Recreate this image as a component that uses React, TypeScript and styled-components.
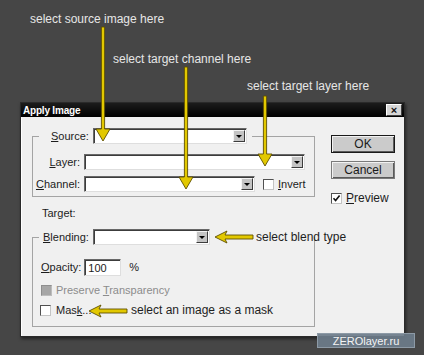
import React from "react";
import styled, { createGlobalStyle } from "styled-components";

const Global = createGlobalStyle`
  html, body {
    margin: 0;
    padding: 0;
    background: #464646;
  }
  body {
    font-family: "Liberation Sans", Arial, sans-serif;
  }
`;

const Page = styled.div`
  position: relative;
  width: 424px;
  height: 355px;
  box-sizing: border-box;
  padding: 102px 0 0 20px;
  overflow: hidden;
  background: #464646;
`;

const Dialog = styled.div`
  width: 385px;
  height: 235px;
  box-sizing: border-box;
  display: flex;
  flex-direction: column;
  background: #f0f0f0;
  border: 1px solid #2a2a2a;
  box-shadow: inset 1px 1px 0 #fff, 1px 2px 3px rgba(0, 0, 0, 0.5);
  font-family: "Liberation Sans", Arial, sans-serif;
  font-size: 11px;
  color: #1c1c1c;
`;

const TitleBar = styled.div`
  height: 14px;
  display: flex;
  align-items: center;
  justify-content: space-between;
  padding: 0 2px;
  background: linear-gradient(#1c1c1c, #000);
`;

const Title = styled.span`
  color: #fff;
  font-weight: bold;
  font-size: 10px;
  letter-spacing: -0.2px;
`;

const CloseButton = styled.span`
  width: 16px;
  height: 12px;
  box-sizing: border-box;
  display: flex;
  align-items: center;
  justify-content: center;
  background: #d6d6d6;
  border: 1px solid;
  border-color: #fff #404040 #404040 #fff;
  font-size: 11px;
  font-weight: bold;
  line-height: 1;
  color: #111;
`;

const Body = styled.div`
  flex: 1;
  display: flex;
  gap: 16px;
  padding: 0 9px 0 11px;
`;

const Main = styled.div`
  width: 283px;
  display: flex;
  flex-direction: column;
  padding-top: 11px;
`;

const Group = styled.fieldset<{ $padBottom: number }>`
  margin: 0;
  padding: 0 0 ${(p) => p.$padBottom}px 0;
  border: 1px solid #a4a4a4;
  min-inline-size: 0;
`;

const Legend = styled.legend<{ $inset: number; $fill?: boolean }>`
  margin-left: 6px;
  padding: 0 5px 0 ${(p) => p.$inset}px;
  box-sizing: border-box;
  width: ${(p) => (p.$fill ? "275px" : "auto")};
`;

const LegendInner = styled.span`
  display: flex;
  align-items: center;
  gap: 4px;
`;

const Row = styled.div<{ $mt: number; $indent?: number }>`
  display: flex;
  align-items: center;
  margin-top: ${(p) => p.$mt}px;
  padding-left: ${(p) => p.$indent ?? 0}px;
`;

const Label = styled.label<{ $w?: number; $muted?: boolean }>`
  width: ${(p) => (p.$w ? `${p.$w}px` : "auto")};
  text-align: right;
  white-space: nowrap;
  color: ${(p) => (p.$muted ? "#8c8c8c" : "#1c1c1c")};
  line-height: 13px;
`;

const Select = styled.div<{ $w: number }>`
  width: ${(p) => p.$w}px;
  height: 16px;
  box-sizing: border-box;
  display: flex;
  justify-content: flex-end;
  padding: 1px 1px 1px 2px;
  margin-left: 4px;
  background: #fff;
  border: 1px solid;
  border-color: #686868 #dedede #dedede #686868;
  box-shadow: inset 1px 1px 0 #3c3c3c;
`;

const DropButton = styled.span`
  width: 12px;
  height: 100%;
  box-sizing: border-box;
  display: flex;
  align-items: center;
  justify-content: center;
  background: #c4c4c4;
  border: 1px solid;
  border-color: #f4f4f4 #3c3c3c #3c3c3c #f4f4f4;

  &::after {
    content: "";
    border-left: 3px solid transparent;
    border-right: 3px solid transparent;
    border-top: 3px solid #000;
  }
`;

const TextInput = styled.div`
  width: 37px;
  height: 17px;
  box-sizing: border-box;
  padding: 0 3px;
  margin-left: 3px;
  display: flex;
  align-items: center;
  background: #fff;
  border: 1px solid;
  border-color: #686868 #dedede #dedede #686868;
  box-shadow: inset 1px 1px 0 #3c3c3c;
`;

const Box = styled.span<{ $disabled?: boolean; $gap?: number }>`
  width: 11px;
  height: 11px;
  box-sizing: border-box;
  flex: none;
  display: flex;
  align-items: center;
  justify-content: center;
  margin-right: ${(p) => p.$gap ?? 4}px;
  background: ${(p) => (p.$disabled ? "#a6a6a6" : "#fff")};
  border: 1px solid;
  border-color: ${(p) =>
    p.$disabled ? "#8e8e8e #bdbdbd #bdbdbd #8e8e8e" : "#505050 #c4c4c4 #c4c4c4 #505050"};
`;

const TargetLabel = styled.div`
  margin: 10px 0 0 10px;
  line-height: 13px;
`;

const Side = styled.div`
  width: 64px;
  display: flex;
  flex-direction: column;
  padding-top: 18px;
`;

const Button = styled.div<{ $default?: boolean; $mt?: number }>`
  height: 18px;
  box-sizing: border-box;
  display: flex;
  align-items: center;
  justify-content: center;
  margin-top: ${(p) => p.$mt ?? 0}px;
  background: #cbcbcb;
  border: 1px solid ${(p) => (p.$default ? "#1a1a1a" : "#7a7a7a")};
  box-shadow: inset 1px 1px 0 #f2f2f2, inset -1px -1px 0 #5a5a5a;
  font-size: 12px;
  color: #1a1a1a;
`;

const Check = styled.div<{ $mt: number }>`
  display: flex;
  align-items: center;
  margin-top: ${(p) => p.$mt}px;
  line-height: 13px;
  font-size: 12px;
`;

const Callout = styled.div<{ $x: number; $y: number; $dark?: boolean }>`
  position: absolute;
  left: ${(p) => p.$x}px;
  top: ${(p) => p.$y}px;
  font-family: "Liberation Sans", Arial, sans-serif;
  font-size: 12px;
  line-height: 14px;
  white-space: nowrap;
  color: ${(p) => (p.$dark ? "#1e1e1e" : "#e6e6e6")};
`;

const Arrows = styled.svg`
  position: absolute;
  left: 0;
  top: 0;
  pointer-events: none;
`;

const Watermark = styled.div`
  position: absolute;
  left: 317px;
  top: 333px;
  width: 98px;
  height: 15px;
  box-sizing: border-box;
  display: flex;
  align-items: center;
  justify-content: center;
  background: rgba(108, 124, 138, 0.92);
  border: 1px solid #8d9aa6;
  color: #f4f4f4;
  font-family: "Liberation Sans", Arial, sans-serif;
  font-size: 11px;
`;

function Tick() {
  return (
    <svg width="9" height="9" viewBox="0 0 9 9">
      <path d="M1.5 4.2 L3.6 6.5 L7.6 1.6" fill="none" stroke="#111" strokeWidth="1.6" />
    </svg>
  );
}

// downward arrow from (x, y0) to tip
function down(x: number, y0: number, tip: number) {
  const s = 1.6;
  const hw = 7;
  const hb = tip - 12;
  return `${x - s},${y0} ${x + s},${y0} ${x + s},${hb} ${x + hw},${hb} ${x},${tip} ${x - hw},${hb} ${x - s},${hb}`;
}

// left-pointing arrow, tip at (tx, ty), tail at x1
function left(tx: number, ty: number, x1: number) {
  const s = 2;
  const hh = 6;
  const hb = tx + 12;
  return `${tx},${ty} ${hb},${ty - hh} ${hb - 2},${ty - s} ${x1},${ty - s} ${x1},${ty + s} ${hb - 2},${ty + s} ${hb},${ty + hh}`;
}

const arrows = [down(103, 27, 141), down(186, 67, 189), down(265, 96, 166), left(215, 237, 253), left(89, 311, 127)];

export default function App() {
  return (
    <Page>
      <Global />
      <Dialog>
        <TitleBar>
          <Title>Apply Image</Title>
          <CloseButton>×</CloseButton>
        </TitleBar>
        <Body>
          <Main>
            <Group $padBottom={4}>
              <Legend $inset={12}>
                <LegendInner>
                  <Label>
                    <u>S</u>ource:
                  </Label>
                  <Select $w={154} style={{ marginLeft: 0 }}>
                    <DropButton />
                  </Select>
                </LegendInner>
              </Legend>
              <Row $mt={10}>
                <Label $w={47}>
                  <u>L</u>ayer:
                </Label>
                <Select $w={221}>
                  <DropButton />
                </Select>
              </Row>
              <Row $mt={6}>
                <Label $w={47}>
                  <u>C</u>hannel:
                </Label>
                <Select $w={171}>
                  <DropButton />
                </Select>
                <Box style={{ marginLeft: 8 }} $gap={4} />
                <Label>
                  <u>I</u>nvert
                </Label>
              </Row>
            </Group>

            <TargetLabel>Target:</TargetLabel>

            <Group $padBottom={9} style={{ marginTop: 9 }}>
              <Legend $inset={4} $fill>
                <LegendInner>
                  <Label>
                    <u>B</u>lending:
                  </Label>
                  <Select $w={117} style={{ marginLeft: 0 }}>
                    <DropButton />
                  </Select>
                </LegendInner>
              </Legend>
              <Row $mt={14} $indent={8}>
                <Label>
                  <u>O</u>pacity:
                </Label>
                <TextInput>100</TextInput>
                <Label style={{ marginLeft: 8 }}>%</Label>
              </Row>
              <Row $mt={8} $indent={8}>
                <Box $disabled />
                <Label $muted>
                  Preserve <u>T</u>ransparency
                </Label>
              </Row>
              <Row $mt={7} $indent={7}>
                <Box $gap={5} />
                <Label>
                  Mas<u>k</u>...
                </Label>
              </Row>
            </Group>
          </Main>

          <Side>
            <Button $default>OK</Button>
            <Button $mt={8}>Cancel</Button>
            <Check $mt={13}>
              <Box $gap={4}>
                <Tick />
              </Box>
              <span>
                <u>P</u>review
              </span>
            </Check>
          </Side>
        </Body>
      </Dialog>

      <Arrows width="424" height="355" viewBox="0 0 424 355">
        {arrows.map((pts, i) => (
          <polygon key={i} points={pts} fill="#e2c800" stroke="#5e4f00" strokeWidth="0.9" strokeLinejoin="round" />
        ))}
      </Arrows>

      <Callout $x={30} $y={12}>select source image here</Callout>
      <Callout $x={113} $y={52}>select target channel here</Callout>
      <Callout $x={247} $y={79}>select target layer here</Callout>
      <Callout $x={256} $y={230} $dark>
        select blend type
      </Callout>
      <Callout $x={131} $y={303} $dark>
        select an image as a mask
      </Callout>

      <Watermark>ZEROlayer.ru</Watermark>
    </Page>
  );
}
